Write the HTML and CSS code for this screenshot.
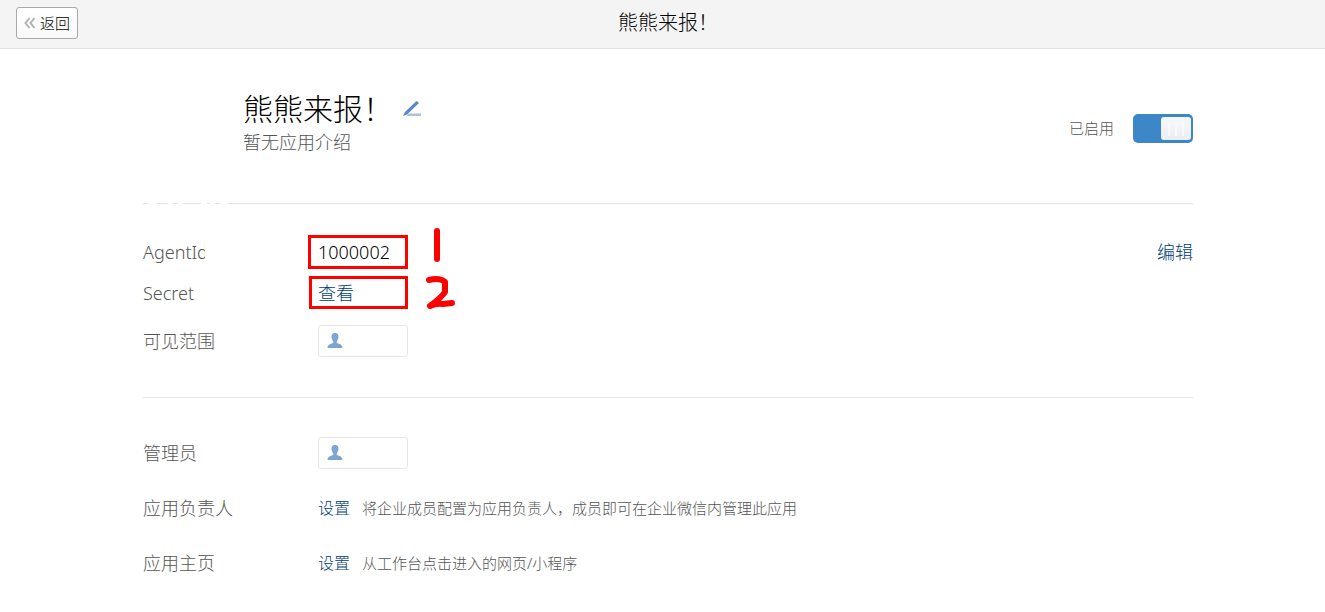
FILE: index.html
```html
<!DOCTYPE html>
<html lang="zh-CN">
<head>
<meta charset="utf-8">
<title>熊熊来报！</title>
<link rel="stylesheet" href="styles.css">
</head>
<body>
<header class="topbar">
  <button class="back" type="button">
    <svg class="back-icon" viewBox="0 0 12 12" aria-hidden="true"><path d="M5.5 1 1.5 6l4 5M10.500 1 6.500 6l4 5"/></svg>
    <span>返回</span>
  </button>
  <h1 class="topbar-title">熊熊来报！</h1>
</header>
<main class="page">
  <section class="app">
    <div class="app-info">
      <div class="app-heading">
        <h2 class="app-name">熊熊来报！</h2>
        <button class="rename" type="button" aria-label="修改名称">
          <svg viewBox="0 0 18 16" aria-hidden="true"><path d="M5 12.500h13v2.500H4z" fill="#a9c2e0"/><path d="M13.500 0l2.500 2L4 13.500l-4 1.500L2 11z" fill="#5a87bd"/></svg>
        </button>
      </div>
      <p class="app-desc">暂无应用介绍</p>
    </div>
    <label class="status">
      <span>已启用</span>
      <input class="switch" type="checkbox" role="switch" checked>
    </label>
  </section>

  <section class="details details-key">
    <div class="row">
      <span class="label"><span class="label-cut">AgentId</span></span>
      <span class="marked">1000002
        <svg class="mark mark-one" viewBox="0 0 8 36" aria-hidden="true"><path d="M4 4v28"/></svg>
      </span>
      <a class="link edit" href="#">编辑</a>
    </div>
    <div class="row">
      <span class="label">Secret</span>
      <span class="marked marked-small"><a class="link" href="#">查看</a>
        <svg class="mark mark-two" viewBox="0 0 32 36" aria-hidden="true"><path d="M4 5Q11 3 17 5L20 7V17Q17 22 5 31Q11 28 18 29L27 28"/></svg>
      </span>
    </div>
    <div class="row row-chip">
      <span class="label">可见范围</span>
      <span class="chip"><svg viewBox="0 0 16 16" aria-hidden="true"><path d="M8 0c2.500 0 3.500 1.600 3.500 3.800 0 2-.7 3.300-1.700 4.200v2c2.700 1 5.700 1.600 5.700 5H.5c0-3.400 3-4 5.700-5V8C5.200 7.100 4.500 5.800 4.500 3.800 4.500 1.600 5.500 0 8 0z"/></svg></span>
    </div>
  </section>

  <section class="details details-admin">
    <div class="row">
      <span class="label">管理员</span>
      <span class="chip"><svg viewBox="0 0 16 16" aria-hidden="true"><path d="M8 0c2.500 0 3.500 1.600 3.500 3.800 0 2-.7 3.300-1.700 4.200v2c2.700 1 5.700 1.600 5.700 5H.5c0-3.400 3-4 5.700-5V8C5.200 7.100 4.500 5.800 4.500 3.800 4.500 1.600 5.500 0 8 0z"/></svg></span>
    </div>
    <div class="row">
      <span class="label">应用负责人</span>
      <a class="link set" href="#">设置</a>
      <span class="hint">将企业成员配置为应用负责人，成员即可在企业微信内管理此应用</span>
    </div>
    <div class="row">
      <span class="label">应用主页</span>
      <a class="link set" href="#">设置</a>
      <span class="hint">从工作台点击进入的网页/小程序</span>
    </div>
  </section>
</main>
</body>
</html>
```
FILE: styles.css
```css
* { box-sizing: border-box; }

body {
  margin: 0;
  background: #fff;
  color: #000;
  font-family: "Noto Sans", "Noto Sans CJK SC", sans-serif;
  font-weight: 300;
  font-size: 18px;
  line-height: 24px;
}

h1, h2, p { margin: 0; font-weight: inherit; }

button { font: inherit; cursor: pointer; }

.topbar {
  display: grid;
  grid-template-columns: 1fr auto 1fr;
  align-items: center;
  min-height: 49px;
  padding: 0 5px 2px 16px;
  background: #f4f4f4;
  border-bottom: 1px solid #dce1e6;
}

.back {
  display: flex;
  align-items: center;
  justify-self: start;
  gap: 4px;
  height: 32px;
  padding: 0 7px;
  border: 1px solid #a9a9a9;
  border-radius: 3px;
  background: linear-gradient(#fff, #f9f9f9);
  color: #000;
  font-size: 15px;
}

.back-icon {
  width: 12px;
  height: 12px;
  fill: none;
  stroke: #b3b3b3;
  stroke-width: 2;
}

.topbar-title { font-size: 20px; }

.page {
  max-width: 1061px;
  margin: 0 auto;
  padding-left: 11px;
}

/* The rule under the app header starts as short dashes, then runs solid. */
.app {
  display: flex;
  align-items: center;
  justify-content: space-between;
  padding: 40px 0 49px 100px;
  background: linear-gradient(90deg,
    #e4e6e9 6px, #fff 6px 14px, #e4e6e9 14px 25px, #fff 25px 30px,
    #e4e6e9 30px 35px, #fff 35px 40px, #e4e6e9 40px 58px, #fff 58px 64px,
    #e4e6e9 64px 67px, #fff 67px 72px, #e4e6e9 72px 78px, #fff 78px 84px,
    #e4e6e9 84px) bottom / 100% 1px no-repeat;
}

.app-heading {
  display: flex;
  align-items: center;
  gap: 10px;
}

.app-name {
  font-size: 30px;
  line-height: 40px;
}

.rename {
  padding: 0;
  border: 0;
  background: none;
  line-height: 0;
}

.rename svg { width: 18px; height: 16px; }

.app-desc { color: #555; line-height: 26px; }

.status {
  display: flex;
  align-items: center;
  gap: 19px;
  padding-top: 12px;
  color: #555;
  font-size: 15px;
}

.switch {
  appearance: none;
  display: grid;
  justify-content: end;
  width: 60px;
  height: 29px;
  margin: 0;
  padding: 3px 2px;
  border-radius: 5px;
  background: #3d87c9;
}

.switch::before {
  content: "";
  width: 30px;
  border-radius: 3px;
  background:
    linear-gradient(#f8f9fb, #f8f9fb) 7px 5px / 2px 14px no-repeat,
    linear-gradient(#f8f9fb, #f8f9fb) 14px 5px / 2px 14px no-repeat,
    linear-gradient(#f8f9fb, #f8f9fb) 21px 5px / 2px 14px no-repeat,
    linear-gradient(#f6f8fb, #ebeef4);
}

.details {
  display: flex;
  flex-direction: column;
}

.details-key {
  gap: 7px;
  padding: 31px 0 40px;
  border-bottom: 1px solid #e4e6e9;
}

.details-admin {
  gap: 23px;
  padding: 39px 0 32px;
}

.row {
  display: flex;
  align-items: center;
  min-height: 32px;
}

.row-chip { padding-top: 9px; }

.label {
  flex: none;
  width: 175px;
  color: #555;
}

.label-cut {
  display: block;
  width: 62px;
  overflow: hidden;
}

.marked {
  position: relative;
  display: flex;
  align-items: center;
  width: 100px;
  height: 34px;
  margin-left: -10px;
  padding-left: 7px;
  border: 3px solid #f00;
}

.marked-small {
  width: 99px;
  height: 33px;
  margin-left: -9px;
  padding-left: 6px;
}

.mark {
  position: absolute;
  fill: none;
  stroke: #f00;
  stroke-width: 6;
  stroke-linecap: round;
  stroke-linejoin: round;
}

.mark-one { left: 122px; top: -11px; width: 8px; height: 36px; }
.mark-two { left: 113px; top: -4px; width: 32px; height: 36px; }

.link { color: #003d73; text-decoration: none; }

.edit { margin-left: auto; }

.chip {
  display: flex;
  align-items: center;
  width: 90px;
  height: 32px;
  padding: 0 8px;
  border: 1px solid #e4e6e9;
  border-radius: 3px;
}

.chip svg { width: 16px; height: 16px; fill: #7da4d3; }

.set { margin-right: 12px; font-size: 16px; }

.hint { color: #555; font-size: 15px; }
```
